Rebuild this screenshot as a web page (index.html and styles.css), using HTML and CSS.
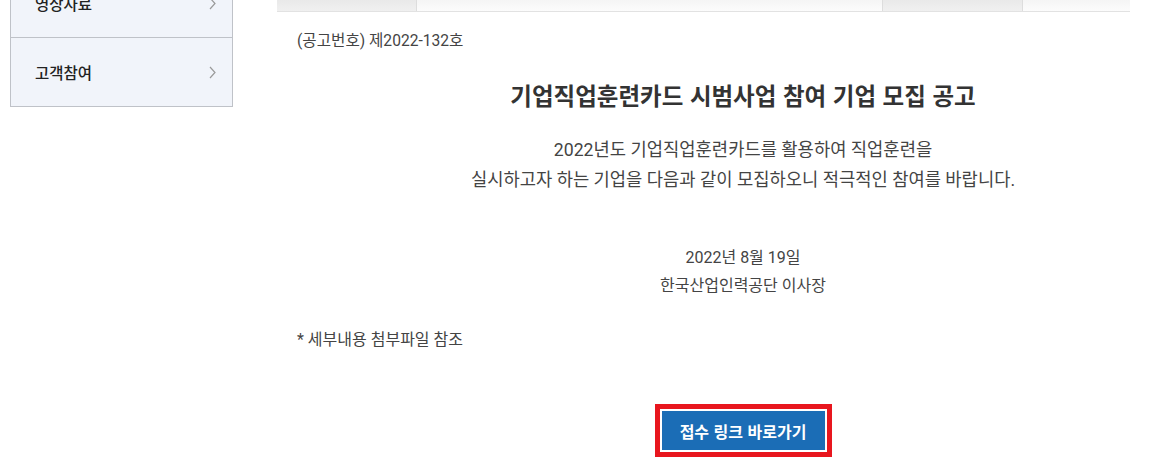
FILE: index.html
```html
<!DOCTYPE html>
<html lang="ko">
<head>
<meta charset="utf-8">
<title>기업직업훈련카드 시범사업 참여 기업 모집 공고</title>
<link rel="stylesheet" href="styles.css">
</head>
<body>
<div class="page">
  <aside class="sidebar">
    <a class="side-item" href="#"><span>영상자료</span><svg class="chev" width="7" height="13" viewBox="0 0 7 13"><polyline points="1,1 6,6.5 1,12" fill="none" stroke="#9a9a9a" stroke-width="1.2"/></svg></a>
    <a class="side-item" href="#"><span>고객참여</span><svg class="chev" width="7" height="13" viewBox="0 0 7 13"><polyline points="1,1 6,6.5 1,12" fill="none" stroke="#9a9a9a" stroke-width="1.2"/></svg></a>
  </aside>
  <main class="main">
    <div class="strip">
      <div class="cell dark c1"></div>
      <div class="cell light c2"></div>
      <div class="cell dark c3"></div>
      <div class="cell light c4"></div>
    </div>
    <div class="notice">
      <p class="num">(공고번호) 제2022-132호</p>
      <h1 class="title">기업직업훈련카드 시범사업 참여 기업 모집 공고</h1>
      <p class="lead">2022년도 기업직업훈련카드를 활용하여 직업훈련을<br>실시하고자 하는 기업을 다음과 같이 모집하오니 적극적인 참여를 바랍니다.</p>
      <p class="sign">2022년 8월 19일<br>한국산업인력공단 이사장</p>
      <p class="note">* 세부내용 첨부파일 참조</p>
      <div class="btn-wrap">
        <span class="btn-frame"><a class="btn" href="#">접수 링크 바로가기</a></span>
      </div>
    </div>
  </main>
</div>
</body>
</html>
```

FILE: styles.css
```css
html, body {
  margin: 0;
  padding: 0;
  overflow: hidden;
  background: #fff;
}
body {
  font-family: Roboto, "Noto Sans CJK KR", sans-serif;
  color: #444;
}
.page {
  display: flex;
  align-items: flex-start;
  margin-top: -32px;
  width: 1300px;
}
.sidebar {
  margin-left: 10px;
  width: 221px;
  border: 1px solid #bfc2c8;
  background: #f1f4fa;
}
.side-item {
  display: flex;
  align-items: center;
  justify-content: space-between;
  height: 68px;
  padding: 0 16px 0 24px;
  text-decoration: none;
  color: #222;
  font-size: 15.5px;
  font-weight: 500;
  font-family: "Noto Sans CJK KR", sans-serif;
}
.side-item + .side-item {
  border-top: 1px solid #bfc2c8;
}
.chev {
  display: block;
}
.main {
  margin-left: 44px;
  width: 932px;
}
.strip {
  display: flex;
  width: 853px;
  height: 43px;
  border-bottom: 1px solid #e2e2e2;
}
.cell {
  height: 100%;
}
.cell + .cell {
  border-left: 1px solid #dddddd;
}
.dark {
  background: linear-gradient(to bottom, #e4e4e4 0%, #e8e8e8 70%, #f0f0f0 100%);
}
.light {
  background: linear-gradient(to bottom, #f0f0f0 0%, #f4f4f4 70%, #fcfcfc 100%);
}
.c1 { width: 139px; }
.c2 { width: 465px; }
.c3 { width: 139px; }
.c4 { flex: 1; }
.notice {
  padding: 0 20px;
}
.num {
  margin: 18px 0 0;
  font-size: 15.6px;
  line-height: 22px;
  color: #444;
}
.title {
  margin: 28px 0 0;
  text-align: center;
  font-size: 23.5px;
  line-height: 30px;
  font-weight: 700;
  color: #333;
  font-family: "Noto Sans CJK KR", sans-serif;
}
.lead {
  margin: 25px 0 0;
  text-align: center;
  font-size: 17.7px;
  line-height: 30px;
  color: #444;
}
.sign {
  margin: 49px 0 0;
  text-align: center;
  font-size: 16px;
  line-height: 28px;
  color: #444;
}
.note {
  margin: 26px 0 0;
  font-size: 16px;
  line-height: 28px;
  color: #444;
}
.btn-wrap {
  margin-top: 50px;
  display: flex;
  justify-content: center;
}
.btn-frame {
  display: inline-flex;
  border: 5px solid #e8161e;
  padding: 2px;
  background: #fff;
}
.btn {
  display: flex;
  align-items: center;
  justify-content: center;
  width: 163px;
  height: 39px;
  background: #1b6db6;
  color: #fff;
  text-decoration: none;
  font-size: 16px;
  font-weight: 700;
  font-family: "Noto Sans CJK KR", sans-serif;
}
```
